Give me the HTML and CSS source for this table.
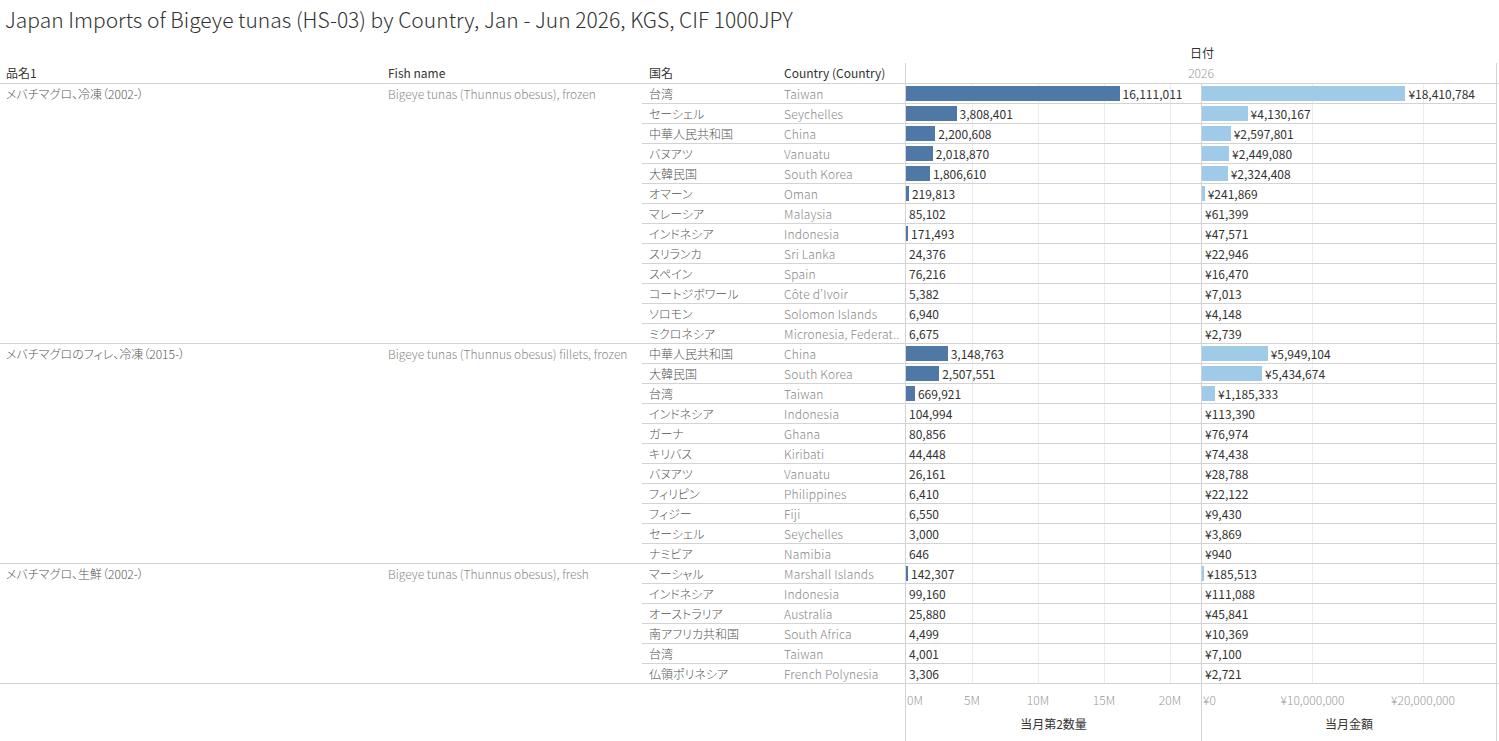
FILE: index.html
```html
<!DOCTYPE html>
<html lang="ja">
<head>
<meta charset="utf-8">
<title>Japan Imports of Bigeye tunas</title>
<link rel="stylesheet" href="styles.css">
</head>
<body>
<div class="page">
  <div class="title">Japan Imports of Bigeye tunas (HS-03) by Country, Jan - Jun 2026, KGS, CIF 1000JPY</div>
  <div class="datehdr"><div class="dh-spacer"></div><div class="dh-label">日付</div></div>
  <div class="hdr">
    <div class="c1 hcell">品名1</div>
    <div class="c2 hcell">Fish name</div>
    <div class="c3 hcell">国名</div>
    <div class="c4 hcell">Country (Country)</div>
    <div class="yr">2026</div>
  </div>

  <div class="group">
    <div class="c1 gname">メバチマグロ、冷凍（2002-）</div>
    <div class="c2 gfish">Bigeye tunas (Thunnus obesus), frozen</div>
    <div class="rows">
      <div class="row"><div class="c3">台湾</div><div class="c4">Taiwan</div><div class="p1"><div class="bar b1" style="width:213.5px"></div><span class="lbl">16,111,011</span></div><div class="p2"><div class="bar b2" style="width:203.4px"></div><span class="lbl">¥18,410,784</span></div></div>
      <div class="row"><div class="c3">セーシェル</div><div class="c4">Seychelles</div><div class="p1"><div class="bar b1" style="width:50.5px"></div><span class="lbl">3,808,401</span></div><div class="p2"><div class="bar b2" style="width:45.6px"></div><span class="lbl">¥4,130,167</span></div></div>
      <div class="row"><div class="c3">中華人民共和国</div><div class="c4">China</div><div class="p1"><div class="bar b1" style="width:29.2px"></div><span class="lbl">2,200,608</span></div><div class="p2"><div class="bar b2" style="width:28.7px"></div><span class="lbl">¥2,597,801</span></div></div>
      <div class="row"><div class="c3">バヌアツ</div><div class="c4">Vanuatu</div><div class="p1"><div class="bar b1" style="width:26.8px"></div><span class="lbl">2,018,870</span></div><div class="p2"><div class="bar b2" style="width:27.1px"></div><span class="lbl">¥2,449,080</span></div></div>
      <div class="row"><div class="c3">大韓民国</div><div class="c4">South Korea</div><div class="p1"><div class="bar b1" style="width:23.9px"></div><span class="lbl">1,806,610</span></div><div class="p2"><div class="bar b2" style="width:25.7px"></div><span class="lbl">¥2,324,408</span></div></div>
      <div class="row"><div class="c3">オマーン</div><div class="c4">Oman</div><div class="p1"><div class="bar b1" style="width:2.9px"></div><span class="lbl">219,813</span></div><div class="p2"><div class="bar b2" style="width:2.7px"></div><span class="lbl">¥241,869</span></div></div>
      <div class="row"><div class="c3">マレーシア</div><div class="c4">Malaysia</div><div class="p1"><div class="bar b1" style="width:0px"></div><span class="lbl">85,102</span></div><div class="p2"><div class="bar b2" style="width:0px"></div><span class="lbl">¥61,399</span></div></div>
      <div class="row"><div class="c3">インドネシア</div><div class="c4">Indonesia</div><div class="p1"><div class="bar b1" style="width:2px"></div><span class="lbl">171,493</span></div><div class="p2"><div class="bar b2" style="width:0px"></div><span class="lbl">¥47,571</span></div></div>
      <div class="row"><div class="c3">スリランカ</div><div class="c4">Sri Lanka</div><div class="p1"><div class="bar b1" style="width:0px"></div><span class="lbl">24,376</span></div><div class="p2"><div class="bar b2" style="width:0px"></div><span class="lbl">¥22,946</span></div></div>
      <div class="row"><div class="c3">スペイン</div><div class="c4">Spain</div><div class="p1"><div class="bar b1" style="width:0px"></div><span class="lbl">76,216</span></div><div class="p2"><div class="bar b2" style="width:0px"></div><span class="lbl">¥16,470</span></div></div>
      <div class="row"><div class="c3">コートジボワール</div><div class="c4">Côte d’Ivoir</div><div class="p1"><div class="bar b1" style="width:0px"></div><span class="lbl">5,382</span></div><div class="p2"><div class="bar b2" style="width:0px"></div><span class="lbl">¥7,013</span></div></div>
      <div class="row"><div class="c3">ソロモン</div><div class="c4">Solomon Islands</div><div class="p1"><div class="bar b1" style="width:0px"></div><span class="lbl">6,940</span></div><div class="p2"><div class="bar b2" style="width:0px"></div><span class="lbl">¥4,148</span></div></div>
      <div class="row"><div class="c3">ミクロネシア</div><div class="c4">Micronesia, Federat..</div><div class="p1"><div class="bar b1" style="width:0px"></div><span class="lbl">6,675</span></div><div class="p2"><div class="bar b2" style="width:0px"></div><span class="lbl">¥2,739</span></div></div>
    </div>
  </div>

  <div class="group">
    <div class="c1 gname">メバチマグロのフィレ、冷凍（2015-）</div>
    <div class="c2 gfish">Bigeye tunas (Thunnus obesus) fillets, frozen</div>
    <div class="rows">
      <div class="row"><div class="c3">中華人民共和国</div><div class="c4">China</div><div class="p1"><div class="bar b1" style="width:41.7px"></div><span class="lbl">3,148,763</span></div><div class="p2"><div class="bar b2" style="width:65.7px"></div><span class="lbl">¥5,949,104</span></div></div>
      <div class="row"><div class="c3">大韓民国</div><div class="c4">South Korea</div><div class="p1"><div class="bar b1" style="width:33.2px"></div><span class="lbl">2,507,551</span></div><div class="p2"><div class="bar b2" style="width:60.1px"></div><span class="lbl">¥5,434,674</span></div></div>
      <div class="row"><div class="c3">台湾</div><div class="c4">Taiwan</div><div class="p1"><div class="bar b1" style="width:8.9px"></div><span class="lbl">669,921</span></div><div class="p2"><div class="bar b2" style="width:13.1px"></div><span class="lbl">¥1,185,333</span></div></div>
      <div class="row"><div class="c3">インドネシア</div><div class="c4">Indonesia</div><div class="p1"><div class="bar b1" style="width:0px"></div><span class="lbl">104,994</span></div><div class="p2"><div class="bar b2" style="width:0px"></div><span class="lbl">¥113,390</span></div></div>
      <div class="row"><div class="c3">ガーナ</div><div class="c4">Ghana</div><div class="p1"><div class="bar b1" style="width:0px"></div><span class="lbl">80,856</span></div><div class="p2"><div class="bar b2" style="width:0px"></div><span class="lbl">¥76,974</span></div></div>
      <div class="row"><div class="c3">キリバス</div><div class="c4">Kiribati</div><div class="p1"><div class="bar b1" style="width:0px"></div><span class="lbl">44,448</span></div><div class="p2"><div class="bar b2" style="width:0px"></div><span class="lbl">¥74,438</span></div></div>
      <div class="row"><div class="c3">バヌアツ</div><div class="c4">Vanuatu</div><div class="p1"><div class="bar b1" style="width:0px"></div><span class="lbl">26,161</span></div><div class="p2"><div class="bar b2" style="width:0px"></div><span class="lbl">¥28,788</span></div></div>
      <div class="row"><div class="c3">フィリピン</div><div class="c4">Philippines</div><div class="p1"><div class="bar b1" style="width:0px"></div><span class="lbl">6,410</span></div><div class="p2"><div class="bar b2" style="width:0px"></div><span class="lbl">¥22,122</span></div></div>
      <div class="row"><div class="c3">フィジー</div><div class="c4">Fiji</div><div class="p1"><div class="bar b1" style="width:0px"></div><span class="lbl">6,550</span></div><div class="p2"><div class="bar b2" style="width:0px"></div><span class="lbl">¥9,430</span></div></div>
      <div class="row"><div class="c3">セーシェル</div><div class="c4">Seychelles</div><div class="p1"><div class="bar b1" style="width:0px"></div><span class="lbl">3,000</span></div><div class="p2"><div class="bar b2" style="width:0px"></div><span class="lbl">¥3,869</span></div></div>
      <div class="row"><div class="c3">ナミビア</div><div class="c4">Namibia</div><div class="p1"><div class="bar b1" style="width:0px"></div><span class="lbl">646</span></div><div class="p2"><div class="bar b2" style="width:0px"></div><span class="lbl">¥940</span></div></div>
    </div>
  </div>

  <div class="group">
    <div class="c1 gname">メバチマグロ、生鮮（2002-）</div>
    <div class="c2 gfish">Bigeye tunas (Thunnus obesus), fresh</div>
    <div class="rows">
      <div class="row"><div class="c3">マーシャル</div><div class="c4">Marshall Islands</div><div class="p1"><div class="bar b1" style="width:2px"></div><span class="lbl">142,307</span></div><div class="p2"><div class="bar b2" style="width:2px"></div><span class="lbl">¥185,513</span></div></div>
      <div class="row"><div class="c3">インドネシア</div><div class="c4">Indonesia</div><div class="p1"><div class="bar b1" style="width:0px"></div><span class="lbl">99,160</span></div><div class="p2"><div class="bar b2" style="width:0px"></div><span class="lbl">¥111,088</span></div></div>
      <div class="row"><div class="c3">オーストラリア</div><div class="c4">Australia</div><div class="p1"><div class="bar b1" style="width:0px"></div><span class="lbl">25,880</span></div><div class="p2"><div class="bar b2" style="width:0px"></div><span class="lbl">¥45,841</span></div></div>
      <div class="row"><div class="c3">南アフリカ共和国</div><div class="c4">South Africa</div><div class="p1"><div class="bar b1" style="width:0px"></div><span class="lbl">4,499</span></div><div class="p2"><div class="bar b2" style="width:0px"></div><span class="lbl">¥10,369</span></div></div>
      <div class="row"><div class="c3">台湾</div><div class="c4">Taiwan</div><div class="p1"><div class="bar b1" style="width:0px"></div><span class="lbl">4,001</span></div><div class="p2"><div class="bar b2" style="width:0px"></div><span class="lbl">¥7,100</span></div></div>
      <div class="row"><div class="c3">仏領ポリネシア</div><div class="c4">French Polynesia</div><div class="p1"><div class="bar b1" style="width:0px"></div><span class="lbl">3,306</span></div><div class="p2"><div class="bar b2" style="width:0px"></div><span class="lbl">¥2,721</span></div></div>
    </div>
  </div>

  <div class="axis">
    <div class="ax-spacer"></div>
    <div class="ax-pane">
      <div class="ticks">
        <span class="tick tick-first">0M</span>
        <span class="tick" style="left:66px">5M</span>
        <span class="tick" style="left:132px">10M</span>
        <span class="tick" style="left:198px">15M</span>
        <span class="tick" style="left:264px">20M</span>
      </div>
      <div class="ax-title">当月第2数量</div>
    </div>
    <div class="ax-pane ax-pane2">
      <div class="ticks">
        <span class="tick tick-first">¥0</span>
        <span class="tick" style="left:110.5px">¥10,000,000</span>
        <span class="tick" style="left:221px">¥20,000,000</span>
      </div>
      <div class="ax-title">当月金額</div>
    </div>
  </div>
</div>
</body>
</html>
```

FILE: styles.css
```css
* { box-sizing: border-box; }
html, body { margin: 0; padding: 0; background: #fff; }
body {
  font-family: "Noto Sans CJK JP", "Noto Sans", sans-serif;
  font-size: 12px;
  color: #555;
  font-feature-settings: "palt";
}
.page { width: 1499px; height: 741px; overflow: hidden; }

.title {
  height: 43px;
  padding: 5px 0 0 5px;
  font-size: 21px;
  font-weight: 300;
  color: #333;
  white-space: nowrap;
  line-height: 28px;
}

.datehdr { display: flex; height: 20px; }
.dh-spacer { width: 905px; }
.dh-label {
  width: 594px;
  text-align: center;
  line-height: 19px;
  color: #333;
}

.hdr {
  display: flex;
  height: 21px;
  border-bottom: 1px solid #d3d3d3;
}
.hcell { line-height: 20px; color: #333; font-weight: 400; }
.yr {
  width: 592px;
  border-left: 1px solid #d3d3d3;
  border-right: 1px solid #d3d3d3;
  text-align: center;
  line-height: 20px;
  color: #999;
  font-weight: 300;
}

.c1 { width: 382px; padding-left: 6px; flex: none; white-space: nowrap; }
.c2 { width: 260px; padding-left: 6px; flex: none; white-space: nowrap; }
.c3 { width: 136px; padding-left: 7px; flex: none; white-space: nowrap; color: #555; font-weight: 300; }
.c4 { width: 127px; padding-left: 6px; flex: none; white-space: nowrap; color: #888; font-weight: 300; letter-spacing: 0.2px; }
.hdr .c3, .hdr .c4 { font-weight: 400; color: #333; letter-spacing: 0; }

.group {
  display: flex;
  border-bottom: 1px solid #d3d3d3;
}
.gname, .gfish { line-height: 19px; font-weight: 300; }
.gname { color: #555; }
.gfish { color: #888; }

.rows { display: flex; flex-direction: column; }
.row {
  display: flex;
  height: 20px;
  border-bottom: 1px solid #d3d3d3;
  line-height: 19px;
}
.row:last-child { height: 19px; border-bottom: none; }

.p1, .p2 {
  display: flex;
  align-items: center;
  flex: none;
  border-left: 1px solid #d3d3d3;
  color: #333;
  background-repeat: no-repeat;
}
.p1 {
  width: 296px;
  background-image:
    linear-gradient(#ececec, #ececec),
    linear-gradient(#ececec, #ececec),
    linear-gradient(#ececec, #ececec),
    linear-gradient(#ececec, #ececec);
  background-size: 1px 100%;
  background-position: 66px 0, 132px 0, 198px 0, 264px 0;
}
.p2 {
  width: 296px;
  border-right: 1px solid #d3d3d3;
  background-image:
    linear-gradient(#ececec, #ececec),
    linear-gradient(#ececec, #ececec);
  background-size: 1px 100%;
  background-position: 110px 0, 221px 0;
}
.bar { height: 15px; flex: none; }
.b1 { background: #4e79a7; }
.b2 { background: #a0cbe8; }
.lbl { margin-left: 3px; white-space: nowrap; }

.axis { display: flex; height: 57px; }
.ax-spacer { width: 905px; flex: none; }
.ax-pane {
  width: 296px;
  flex: none;
  border-left: 1px solid #d3d3d3;
  display: flex;
  flex-direction: column;
}
.ax-pane2 { border-right: 1px solid #d3d3d3; }
.ticks { position: relative; height: 32px; color: #999; font-weight: 300; }
.tick {
  position: absolute;
  top: 8px;
  line-height: 16px;
  transform: translateX(-50%);
  white-space: nowrap;
}
.tick-first { left: 1px; transform: none; }
.ax-title { text-align: center; color: #333; line-height: 16px; }
```
